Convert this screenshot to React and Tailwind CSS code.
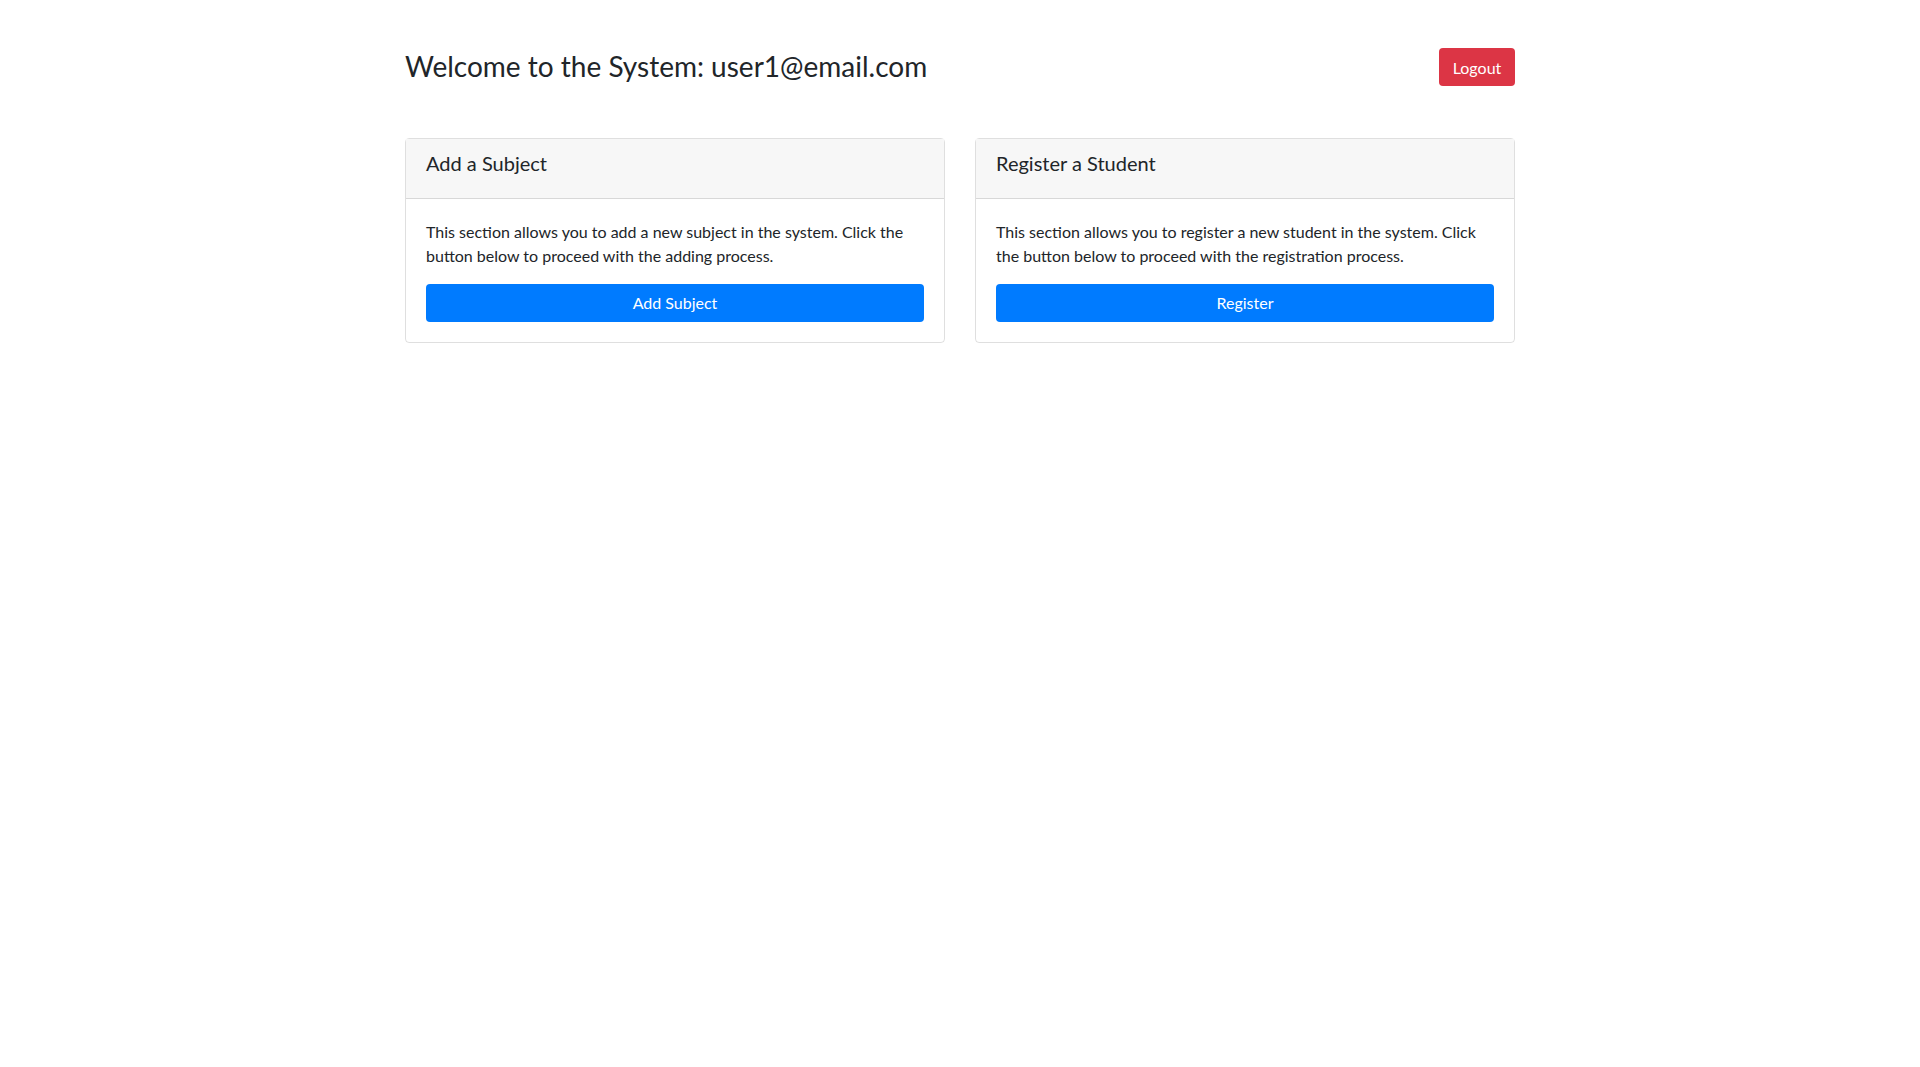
const cards = [
  {
    id: 'subject',
    title: 'Add a Subject',
    lines: ['This section allows you to add a new subject in the system. Click the', 'button below to proceed with the adding process.'],
    action: 'Add Subject',
  },
  {
    id: 'student',
    title: 'Register a Student',
    lines: ['This section allows you to register a new student in the system. Click', 'the button below to proceed with the registration process.'],
    action: 'Register',
  },
];

function App() {
  return (
    <div className="min-h-screen bg-white font-['Lato','Noto_Sans',sans-serif] text-[#212529]">
      <div className="mx-auto w-[1110px] pt-12">
        <div className="flex items-center justify-between">
          <h3 className="text-[28px] font-normal leading-[1.2]">Welcome to the System: user1@email.com</h3>
          <button className="h-[38px] w-[76px] rounded-[4px] bg-[#dc3545] pt-[2px] text-base text-white">Logout</button>
        </div>

        <div className="mt-[52px] grid grid-cols-2 gap-[30px]">
          {cards.map((card) => (
            <Card key={card.id} {...card} />
          ))}
        </div>
      </div>
    </div>
  );
}

function Card({ title, lines, action }) {
  return (
    <div className="rounded-[4px] border border-black/[0.125]">
      <div className="flex h-[60px] items-start border-b border-black/[0.125] bg-[#f7f7f7] px-5 pt-[12px]">
        <h5 className="text-xl leading-6">{title}</h5>
      </div>
      <div className="px-5 pt-[21px] pb-5">
        <p className="text-base leading-6">
          {lines[0]}
          <br />
          {lines[1]}
        </p>
        <button className="mt-[16px] h-[38px] w-full rounded-[4px] bg-[#007bff] text-base text-white">{action}</button>
      </div>
    </div>
  );
}

export default App;
